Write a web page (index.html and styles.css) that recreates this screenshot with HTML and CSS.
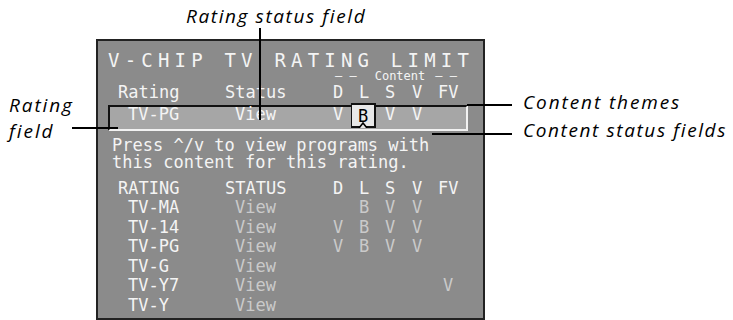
FILE: index.html
```html
<!DOCTYPE HTML>
<html>
<head>
<meta http-equiv="Content-Type" content="text/html; charset=utf-8">
<title>V-CHIP TV RATING LIMIT</title>
<link rel="stylesheet" href="styles.css">
</head>
<body>
<div class="figure">
  <div class="screen">
    <div class="title">V-CHIP TV RATING LIMIT</div>
    <div class="content-head"><span>– –</span><span class="ctext">Content</span><span>– –</span></div>
    <div class="cols head">
      <span>Rating</span><span>Status</span><span>D</span><span>L</span><span>S</span><span>V</span><span>FV</span>
    </div>
    <div class="selrow">
      <div class="cols">
        <span class="ind">TV-PG</span><span class="ind">View</span><span>V</span>
        <span class="lcell"><span class="cursor">B<svg class="caret" width="10" height="7" viewBox="0 0 10 7"><polyline points="1,7 5,2 9,7" fill="#e6e6e6" stroke="#000" stroke-width="1.6"/></svg></span></span>
        <span>V</span><span>V</span><span></span>
      </div>
    </div>
    <div class="press">Press ^/v to view programs with<br>this content for this rating.</div>
    <div class="cols head2">
      <span>RATING</span><span>STATUS</span><span>D</span><span>L</span><span>S</span><span>V</span><span>FV</span>
    </div>
    <div class="list">
      <div class="cols row"><span class="ind name">TV-MA</span><span class="ind">View</span><span></span><span>B</span><span>V</span><span>V</span><span></span></div>
      <div class="cols row"><span class="ind name">TV-14</span><span class="ind">View</span><span>V</span><span>B</span><span>V</span><span>V</span><span></span></div>
      <div class="cols row"><span class="ind name">TV-PG</span><span class="ind">View</span><span>V</span><span>B</span><span>V</span><span>V</span><span></span></div>
      <div class="cols row"><span class="ind name">TV-G</span><span class="ind">View</span><span></span><span></span><span></span><span></span><span></span></div>
      <div class="cols row"><span class="ind name">TV-Y7</span><span class="ind">View</span><span></span><span></span><span></span><span></span><span class="fv">V</span></div>
      <div class="cols row"><span class="ind name">TV-Y</span><span class="ind">View</span><span></span><span></span><span></span><span></span><span></span></div>
    </div>
  </div>

  <div class="label lb-status">Rating status field</div>
  <div class="line ln-status"></div>
  <div class="label lb-rating">Rating<br>field</div>
  <div class="line ln-rating"></div>
  <div class="label lb-themes">Content themes</div>
  <div class="line ln-themes"></div>
  <div class="label lb-fields">Content status fields</div>
  <div class="line ln-fields"></div>
</div>
</body>
</html>
```
FILE: styles.css
```css
body {margin:0; background:#fff;}
.figure {position:relative; width:733px; height:320px; overflow:hidden;}

/* tv screen */
.screen {box-sizing:border-box; margin:39px 0 0 96px; width:389px; height:281px; border:2px solid #222; background:#8b8b8b; padding-left:10px; font-family:"DejaVu Sans Mono", monospace; font-size:17px; color:#f4f4f4;}
.title {padding-top:11px; height:16px; font-size:19px; line-height:16px; letter-spacing:5.2px; white-space:nowrap;}
.content-head {display:flex; margin-left:227px; margin-top:3px; font-size:12px; line-height:10px; white-space:pre;}
.content-head .ctext {margin:0 10px 0 18px;}
.cols {display:grid; grid-template-columns:107px 108px 26px 26px 27px 26px 1fr; padding-left:10px; line-height:20px; white-space:nowrap;}
.head {margin-top:1px;}

.selrow {box-sizing:border-box; margin-top:3px; width:360px; height:26px; background:#a6a6a6; border-style:solid; border-width:2px; border-color:#111 #f2f2f2 #f2f2f2 #111;}
.selrow .cols {padding-left:8px; line-height:14px;}
.ind {padding-left:10px;}
.lcell {position:relative;}
.cursor {position:absolute; left:-8px; top:-4px; box-sizing:border-box; width:25px; height:25px; background:#e8e8e8; border:2px solid #111; border-left-width:1px; color:#000; text-align:center; line-height:22px;}
.caret {position:absolute; left:6px; bottom:-2px;}

.press {margin-top:6px; padding-left:4px; line-height:17px; white-space:nowrap;}
.head2 {margin-top:7px;}
.list .row {line-height:19.6px; color:#cacaca;}
.list .name {color:#f4f4f4;}
.fv {padding-left:5px;}

/* callouts */
.label {position:absolute; font-family:"Open Sans", sans-serif; font-style:italic; font-size:19px; letter-spacing:1.9px; color:#000; white-space:nowrap;}
.line {position:absolute; background:#000;}
.lb-status {left:186px; top:3px; line-height:26px; letter-spacing:1.6px;}
.ln-status {left:259px; top:28px; width:2px; height:92px;}
.lb-rating {left:9px; top:92px; line-height:26px;}
.ln-rating {left:72px; top:127px; width:46px; height:2px;}
.lb-themes {left:523px; top:89px; line-height:26px;}
.ln-themes {left:467px; top:104px; width:45px; height:2px;}
.lb-fields {left:523px; top:117px; line-height:26px; letter-spacing:1.6px;}
.ln-fields {left:432px; top:133px; width:80px; height:2px;}
```
